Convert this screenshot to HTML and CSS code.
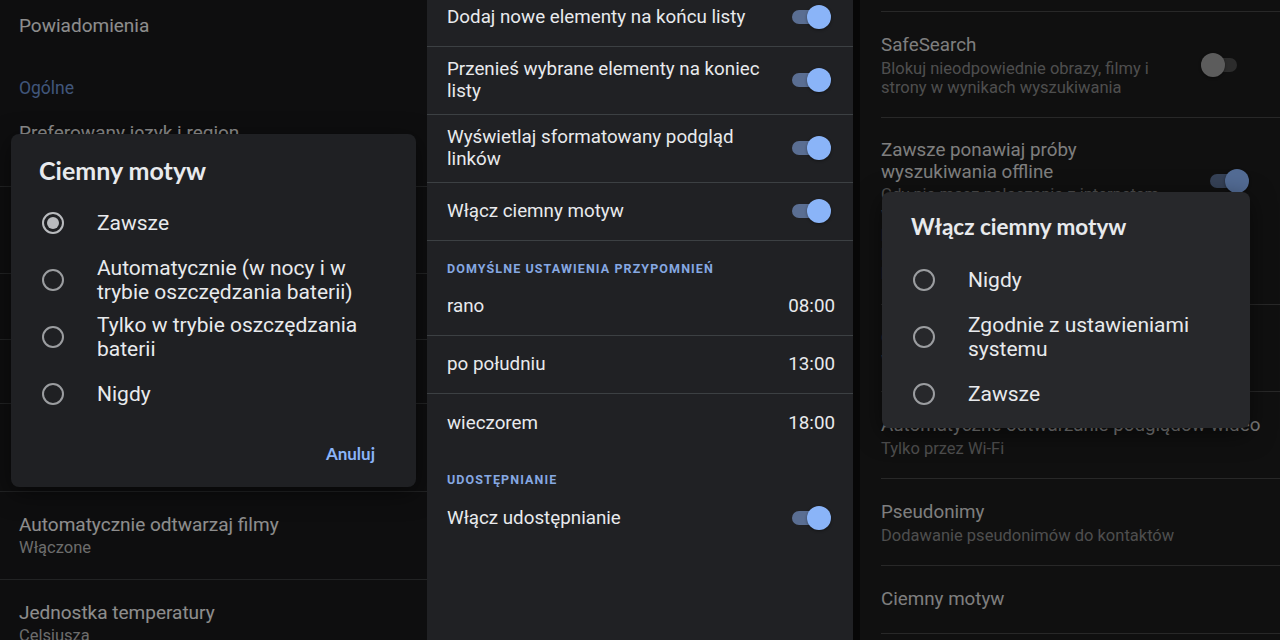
FILE: index.html
```html
<!DOCTYPE html>
<html lang="pl">

<head>
    <meta charset="UTF-8">
    <meta name="viewport" content="width=device-width, initial-scale=1.0">
    <title>Ciemny motyw</title>
    <link rel="stylesheet" href="styles.css">
</head>

<body>
    <div class="screen">

        <!-- Aplikacja Google: ustawienia ogólne -->
        <section class="panel panel-left">
            <div class="item item-top">
                <div class="item-title">Powiadomienia</div>
            </div>
            <div class="group-label">Ogólne</div>
            <div class="item h-86">
                <div class="item-title">Preferowany język i region</div>
                <div class="item-sub">polski (Polska)</div>
            </div>
            <div class="item h-87">
                <div class="item-title">Ciemny motyw</div>
                <div class="item-sub">Zawsze</div>
            </div>
            <div class="item h-66">
                <div class="item-title">Wyszukiwanie głosowe</div>
            </div>
            <div class="item h-64">
                <div class="item-title">Konta i prywatność</div>
            </div>
            <div class="item h-88">
                <div class="item-title">Dostępność</div>
                <div class="item-sub">Powiększanie tekstu</div>
            </div>
            <div class="item h-88">
                <div class="item-title">Automatycznie odtwarzaj filmy</div>
                <div class="item-sub">Włączone</div>
            </div>
            <div class="item h-88">
                <div class="item-title">Jednostka temperatury</div>
                <div class="item-sub">Celsjusza</div>
            </div>

            <div class="scrim"></div>

            <div class="dialog dialog-left">
                <h2 class="dialog-title">Ciemny motyw</h2>
                <div class="option">
                    <span class="radio checked"></span>
                    <span class="option-label">Zawsze</span>
                </div>
                <div class="option">
                    <span class="radio"></span>
                    <span class="option-label">Automatycznie (w nocy i w trybie oszczędzania baterii)</span>
                </div>
                <div class="option">
                    <span class="radio"></span>
                    <span class="option-label">Tylko w trybie oszczędzania baterii</span>
                </div>
                <div class="option">
                    <span class="radio"></span>
                    <span class="option-label">Nigdy</span>
                </div>
                <div class="dialog-actions">
                    <button class="text-button">Anuluj</button>
                </div>
            </div>
        </section>

        <!-- Keep: ustawienia -->
        <section class="panel panel-mid">
            <div class="prefs">
                <div class="pref">
                    <span class="pref-label">Dodaj nowe elementy na końcu listy</span>
                    <span class="switch on"></span>
                </div>
                <div class="pref">
                    <span class="pref-label">Przenieś wybrane elementy na koniec listy</span>
                    <span class="switch on"></span>
                </div>
                <div class="pref">
                    <span class="pref-label">Wyświetlaj sformatowany podgląd linków</span>
                    <span class="switch on"></span>
                </div>
                <div class="pref">
                    <span class="pref-label">Włącz ciemny motyw</span>
                    <span class="switch on"></span>
                </div>

                <div class="pref-header">DOMYŚLNE USTAWIENIA PRZYPOMNIEŃ</div>
                <div class="pref">
                    <span class="pref-label">rano</span>
                    <span class="pref-value">08:00</span>
                </div>
                <div class="pref">
                    <span class="pref-label">po południu</span>
                    <span class="pref-value">13:00</span>
                </div>
                <div class="pref no-line">
                    <span class="pref-label">wieczorem</span>
                    <span class="pref-value">18:00</span>
                </div>

                <div class="pref-header">UDOSTĘPNIANIE</div>
                <div class="pref no-line">
                    <span class="pref-label">Włącz udostępnianie</span>
                    <span class="switch on"></span>
                </div>
            </div>
        </section>

        <!-- Aplikacja Google: wyszukiwanie -->
        <section class="panel panel-right">
            <div class="r-top"></div>
            <div class="r-item has-switch">
                <div class="r-text">
                    <div class="r-title">SafeSearch</div>
                    <div class="r-sub">Blokuj nieodpowiednie obrazy, filmy i strony w wynikach wyszukiwania</div>
                </div>
                <span class="switch off"></span>
            </div>
            <div class="r-item has-switch r-item-top">
                <div class="r-text">
                    <div class="r-title r-title-tight">Zawsze ponawiaj próby wyszukiwania offline</div>
                    <div class="r-sub">Gdy nie masz połączenia z internetem, wyszukiwania będą zapisywane i ponawiane automatycznie, gdy tylko połączenie wróci. Otrzymasz wtedy powiadomienie z wynikami.</div>
                </div>
                <span class="switch on offline-switch"></span>
            </div>
            <div class="r-item">
                <div class="r-text">
                    <div class="r-title">Otwieraj strony internetowe w aplikacji</div>
                    <div class="r-sub">Włączone</div>
                </div>
            </div>
            <div class="r-item">
                <div class="r-text">
                    <div class="r-title">Automatyczne odtwarzanie podglądów wideo</div>
                    <div class="r-sub">Tylko przez Wi-Fi</div>
                </div>
            </div>
            <div class="r-item">
                <div class="r-text">
                    <div class="r-title">Pseudonimy</div>
                    <div class="r-sub">Dodawanie pseudonimów do kontaktów</div>
                </div>
            </div>
            <div class="r-item">
                <div class="r-text">
                    <div class="r-title">Ciemny motyw</div>
                </div>
            </div>

            <div class="scrim"></div>

            <div class="dialog dialog-right">
                <h2 class="dialog-title">Włącz ciemny motyw</h2>
                <div class="option">
                    <span class="radio"></span>
                    <span class="option-label">Nigdy</span>
                </div>
                <div class="option">
                    <span class="radio"></span>
                    <span class="option-label">Zgodnie z ustawieniami systemu</span>
                </div>
                <div class="option">
                    <span class="radio"></span>
                    <span class="option-label">Zawsze</span>
                </div>
            </div>
        </section>

    </div>
</body>

</html>
```

FILE: styles.css
```css
* {
    box-sizing: border-box;
}

body {
    margin: 0;
    background-color: #000;
    font-family: Roboto, "Noto Sans", Arial, sans-serif;
}

.screen {
    display: flex;
    width: 1280px;
    height: 640px;
    overflow: hidden;
}

.panel {
    position: relative;
    height: 640px;
    overflow: hidden;
}

.panel-left {
    width: 427px;
    background-color: #181819;
}

.panel-mid {
    width: 426px;
    background-color: #202124;
}

.panel-right {
    width: 427px;
    background-color: #1b1b1b;
    border-left: 7px solid #070707;
}

.scrim {
    position: absolute;
    inset: 0;
    background-color: rgba(0, 0, 0, 0.4);
}

/* lewy panel */

.item {
    display: flex;
    flex-direction: column;
    justify-content: center;
    padding: 0 19px;
    border-bottom: 1px solid #3a3b3d;
}

.item-top {
    height: 52px;
    border-bottom: none;
}

.h-86 { height: 86px; }
.h-87 { height: 87px; }
.h-66 { height: 66px; }
.h-64 { height: 64px; }
.h-88 { height: 88px; }

.item-title {
    font-size: 19px;
    line-height: 24px;
    color: #ececec;
}

.item-sub {
    font-size: 16.5px;
    line-height: 22px;
    color: #b5b5b5;
}

.group-label {
    padding: 27px 19px 4px;
    font-size: 17.5px;
    line-height: 18px;
    color: #6c90cc;
}

/* okna dialogowe */

.dialog {
    position: absolute;
    border-radius: 8px;
    box-shadow: 0 6px 24px rgba(0, 0, 0, 0.5);
    color: #e8eaed;
}

.dialog-left {
    left: 11px;
    top: 134px;
    width: 405px;
    padding: 23px 26px 23px 31px;
    background-color: #1f2023;
}

.dialog-right {
    left: 22px;
    top: 192px;
    width: 368px;
    padding: 22px 24px 6px 31px;
    background-color: #27282b;
}

.dialog-title {
    margin: 0 0 11px -3px;
    font-family: Lato, "Open Sans", sans-serif;
    font-size: 25px;
    line-height: 26px;
    font-weight: 700;
    color: #e8eaed;
}

.dialog-right .dialog-title {
    margin-left: -2px;
    font-size: 22.5px;
}

.option {
    display: flex;
    align-items: center;
    min-height: 57px;
}

.radio {
    position: relative;
    flex-shrink: 0;
    width: 22px;
    height: 22px;
    border: 2px solid #9b9da0;
    border-radius: 50%;
    margin-right: 33px;
}

.radio.checked {
    border-color: #b9bbbe;
}

.radio.checked::after {
    content: "";
    position: absolute;
    left: 3px;
    top: 3px;
    width: 12px;
    height: 12px;
    border-radius: 50%;
    background-color: #b9bbbe;
}

.option-label {
    font-size: 21px;
    line-height: 24px;
    color: #e8eaed;
}

.dialog-actions {
    display: flex;
    justify-content: flex-end;
    margin-top: 22px;
}

.text-button {
    padding: 0;
    margin-right: 15px;
    border: none;
    background: none;
    font-family: Lato, "Open Sans", sans-serif;
    font-size: 17px;
    line-height: 20px;
    font-weight: 700;
    color: #8ab4f8;
    cursor: pointer;
}

/* środkowy panel */

.prefs {
    margin-top: -11px;
}

.pref {
    display: flex;
    align-items: center;
    min-height: 58px;
    padding: 11px 18px 12px 20px;
    border-bottom: 1px solid #3c4043;
    color: #e8eaed;
}

.pref.no-line {
    border-bottom: none;
}

.pref-label {
    flex: 1;
    margin-right: 20px;
    font-size: 18.8px;
    line-height: 22px;
}

.pref-value {
    font-size: 18.8px;
    line-height: 22px;
}

.pref-header {
    padding: 20px 20px 1px;
    font-size: 12.5px;
    line-height: 16px;
    font-weight: 700;
    letter-spacing: 1.1px;
    color: #86a8e2;
}

/* przełącznik */

.switch {
    position: relative;
    flex-shrink: 0;
    width: 39px;
    height: 24px;
    margin-right: 4px;
}

.switch::before {
    content: "";
    position: absolute;
    left: 0;
    top: 5px;
    width: 36px;
    height: 14px;
    border-radius: 7px;
    background-color: #5a6e92;
}

.switch::after {
    content: "";
    position: absolute;
    right: 0;
    top: 0;
    width: 24px;
    height: 24px;
    border-radius: 50%;
    background-color: #8ab4f8;
    box-shadow: 0 1px 3px rgba(0, 0, 0, 0.4);
}

.switch.off::before {
    background-color: #4a4a4a;
}

.switch.off::after {
    left: 0;
    right: auto;
    background-color: #9a9a9a;
}

/* prawy panel */

.r-top {
    height: 12px;
    margin-left: 21px;
    border-bottom: 1px solid #444;
}

.r-item {
    display: flex;
    align-items: center;
    margin-left: 21px;
    padding: 21px 8px 20px 0;
    border-bottom: 1px solid #444;
}

.r-item.has-switch {
    padding-right: 40px;
}

.r-item-top {
    align-items: flex-start;
    padding-bottom: 24px;
}

.r-text {
    flex: 1;
}

.r-item .switch {
    margin-left: 34px;
    margin-right: 0;
}

.r-item .offline-switch {
    margin-top: 30px;
    margin-right: -9px;
}

.r-title {
    font-size: 18.8px;
    line-height: 24px;
    margin-bottom: 2px;
    color: #d2d2d2;
}

.r-title-tight {
    line-height: 22px;
}

.r-sub {
    font-size: 16.5px;
    line-height: 19px;
    color: #838383;
}
```
